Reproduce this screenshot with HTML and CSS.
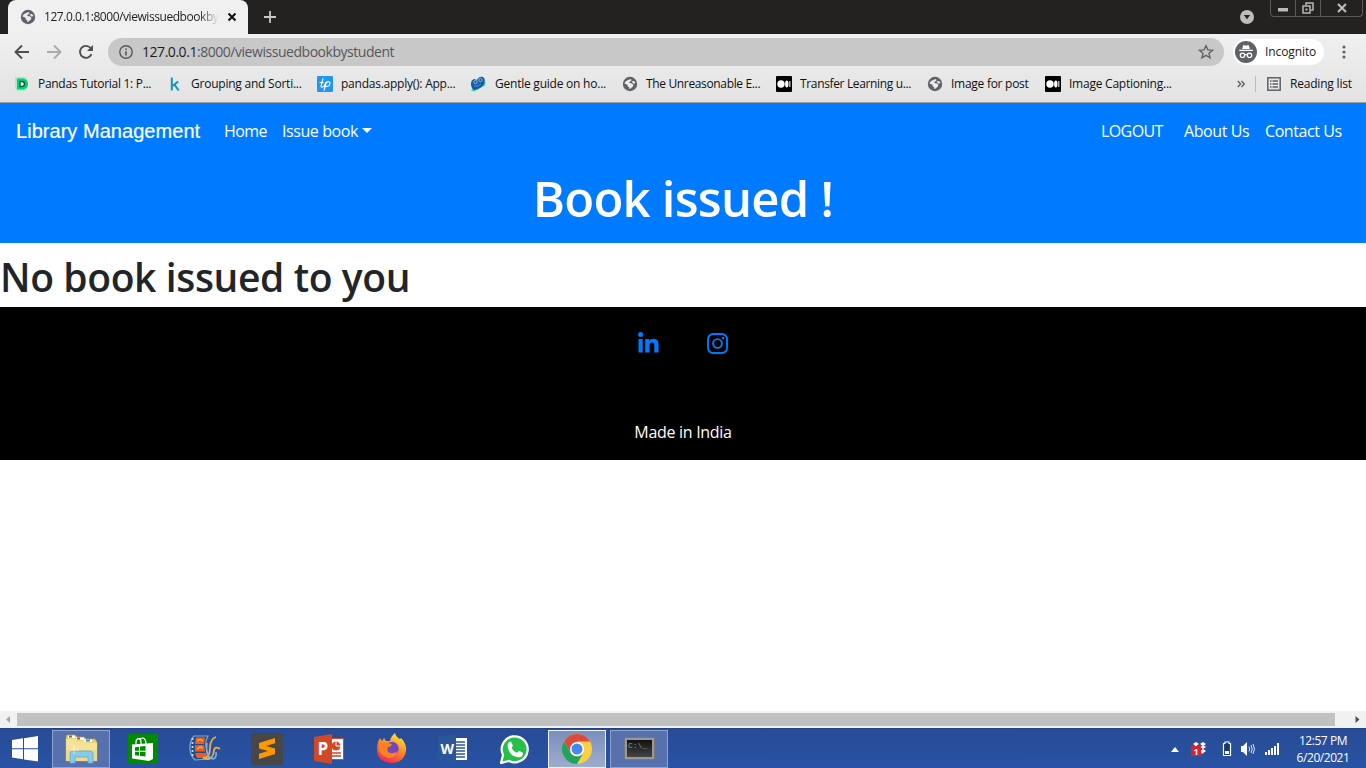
FILE: index.html
```html
<!DOCTYPE html>
<html lang="en">
<head>
<meta charset="utf-8">
<title>Library Management</title>
<link rel="stylesheet" href="styles.css">
</head>
<body>
<svg width="0" height="0" class="defs">
  <symbol id="globe" viewBox="0 0 16 16"><circle cx="8" cy="8" r="7.2" fill="#5f6368"/><path d="M2.500 7.500 3.500 5.500 6 4l3-1 .5 1.500L8 5.500 7 7l2.500.3 2 1.500-.8 2-2.200 1.700-1.500.5.3-1.800-1.500-.8-.3-1.600-1.800-.8Z" fill="#ececec"/><path d="M9.500 5.500l2.500-.5 1.500 2-2 .7Z" fill="#ececec"/></symbol>
  <symbol id="medium" viewBox="0 0 16 16"><rect width="16" height="16" rx="1" fill="#000"/><circle cx="5" cy="8" r="3.7" fill="#fff"/><ellipse cx="10.8" cy="8" rx="1.7" ry="3.5" fill="#fff"/><path d="M13.8 5v6" stroke="#ddd" stroke-width="1.2"/></symbol>
</svg>

<header class="tabstrip">
  <div class="tab">
    <svg class="i16"><use href="#globe"/></svg>
    <span class="tab-title">127.0.0.1:8000/viewissuedbookbystudent</span>
    <svg class="tab-close" viewBox="0 0 10 10"><path d="M1.5 1.5l7 7M8.5 1.5l-7 7" stroke="#111" stroke-width="2"/></svg>
  </div>
  <svg class="plus" viewBox="0 0 12 12"><path d="M6 0v12M0 6h12" stroke="#c8c8c8" stroke-width="1.8"/></svg>
  <svg class="tab-search" viewBox="0 0 14 14"><circle cx="7" cy="7" r="7" fill="#bdbdbd"/><path d="M3.8 5h6.4L7 9.3Z" fill="#242220"/></svg>
  <div class="winctl">
    <span><svg width="12" height="10"><rect x="1" y="5" width="10" height="3.5" fill="#b9b9b9"/></svg></span>
    <span><svg width="12" height="12" viewBox="0 0 12 12"><path d="M4 3V1h7v7H9" fill="none" stroke="#b9b9b9" stroke-width="1.5"/><rect x="1" y="4" width="7" height="7" fill="#242220" stroke="#b9b9b9" stroke-width="1.5"/><rect x="3.5" y="6.5" width="2" height="2" fill="#b9b9b9"/></svg></span>
    <span><svg width="10" height="10" viewBox="0 0 10 10"><path d="M1 1l8 8M9 1l-8 8" stroke="#b9b9b9" stroke-width="2.2"/></svg></span>
  </div>
</header>

<div class="toolbar">
  <svg class="nav-ico back" viewBox="0 0 16 16"><path d="M15 8H2M8 1.5 1.5 8 8 14.5" fill="none" stroke="#4c4f53" stroke-width="1.9"/></svg>
  <svg class="nav-ico fwd" viewBox="0 0 16 16"><path d="M1 8h13M8 1.5 14.5 8 8 14.5" fill="none" stroke="#ababab" stroke-width="1.9"/></svg>
  <svg class="nav-ico reload" viewBox="0 0 16 16"><path d="M13.500 10.200A6 6 0 1 1 12.600 4l1 1.200" fill="none" stroke="#4c4f53" stroke-width="1.900"/><path d="M15 1v6H9Z" fill="#4c4f53"/></svg>
  <div class="omnibox">
    <svg class="info" viewBox="0 0 14 14"><circle cx="7" cy="7" r="6.2" fill="none" stroke="#55585c" stroke-width="1.4"/><path d="M7 6.2v4.3M7 3.4V5" stroke="#55585c" stroke-width="1.6"/></svg>
    <span class="url"><b>127.0.0.1</b>:8000/viewissuedbookbystudent</span>
    <svg class="star" viewBox="0 0 16 16"><path d="M8 1.7l1.9 4.2 4.6.4-3.5 3 1.1 4.5L8 11.4l-4.1 2.4L5 9.3l-3.5-3 4.6-.4Z" fill="none" stroke="#5f6368" stroke-width="1.4"/></svg>
  </div>
  <div class="incog">
    <svg width="22" height="22" viewBox="0 0 22 22"><circle cx="11" cy="11" r="11" fill="#5f6368"/><path d="M7.2 8 8.2 4.3h1.6l1.2.5 1.2-.5h1.6L14.8 8ZM4.2 8.8h13.6V10H4.2Z" fill="#fff"/><path d="M9.600 14q1.400-.9 2.800 0" stroke="#fff" fill="none" stroke-width="1.1"/><circle cx="7.500" cy="14.300" r="2.200" fill="none" stroke="#fff" stroke-width="1.2"/><circle cx="14.500" cy="14.300" r="2.200" fill="none" stroke="#fff" stroke-width="1.2"/></svg>
    <span>Incognito</span>
  </div>
  <svg class="dots" viewBox="0 0 4 14"><g fill="#5f6368"><circle cx="2" cy="2" r="1.600"/><circle cx="2" cy="7" r="1.600"/><circle cx="2" cy="12" r="1.600"/></g></svg>
</div>

<div class="bookmarks">
  <div class="bm-grid">
    <div class="bm"><svg class="i16" viewBox="0 0 16 16"><path d="M1 1h10l3 3v8l-3 3H3l-2-3Z" fill="#a6ecc8"/><path d="M3 2.500h5.500C12 2.500 14 5 14 8s-2 5.500-5.500 5.500H3Z" fill="#0ccb7a"/><path d="M6 5.500h2a2.500 2.500 0 0 1 0 5H6Z" fill="#e8f8ef" stroke="#0b5e48" stroke-width="1.500"/></svg><span class="b1">Pandas Tutorial 1: P...</span></div>
    <div class="bm"><svg class="i16" viewBox="0 0 16 16"><path d="M5.800 1.500v13M12.200 5.500 6.500 10M8.400 8.500l4.300 6" fill="none" stroke="#1296be" stroke-width="2"/></svg><span class="b2">Grouping and Sorti...</span></div>
    <div class="bm"><svg class="i16" viewBox="0 0 16 16"><rect width="16" height="16" rx="1" fill="#2196f3"/><path d="M2.500 6.500h4M6 2.500 4 10q0 2.300 3 .2l2-4M9.500 5.500 7 14.500M9 7.500c2-3 4.600-2 3.800.6-.7 2.400-3.500 3-4.400 1.500" fill="none" stroke="#fff" stroke-width="1.100"/></svg><span class="b3">pandas.apply(): App...</span></div>
    <div class="bm"><svg class="i16" viewBox="0 0 16 16"><path d="M3 12 15.500 5.500 15 9.500 4 15.500 1 14.500Z" fill="#27d8b5"/><path d="M1 8Q1 4 4 3l3 1q2-4 6-3 3 2 1 7-3 5-10 6-3-2-3-6Z" fill="#1859a4"/><circle cx="5.500" cy="6" r="1.700" fill="none" stroke="#8eb9db"/><circle cx="10.500" cy="4" r="1.700" fill="none" stroke="#8eb9db"/><path d="M4 10q4 1 7-2" stroke="#5692c5" fill="none"/></svg><span class="b4">Gentle guide on ho...</span></div>
    <div class="bm"><svg class="i16"><use href="#globe"/></svg><span class="b5">The Unreasonable E...</span></div>
    <div class="bm"><svg class="i16"><use href="#medium"/></svg><span class="b6">Transfer Learning u...</span></div>
    <div class="bm"><svg class="i16"><use href="#globe"/></svg><span class="b7">Image for post</span></div>
    <div class="bm"><svg class="i16"><use href="#medium"/></svg><span class="b8">Image Captioning...</span></div>
  </div>
  <svg class="more" viewBox="0 0 8 8"><path d="M.8 1l2.800 3L.8 7M4.500 1l2.800 3-2.800 3" fill="none" stroke="#5f6368" stroke-width="1.400"/></svg>
  <div class="reading">
    <svg width="14" height="14" viewBox="0 0 14 14"><rect x=".8" y=".8" width="12.400" height="12.400" fill="none" stroke="#5f6368" stroke-width="1.500"/><path d="M3 4h1.500M3 7h1.500M3 10h1.500M5.500 4H11M5.500 7H11M5.500 10H11" stroke="#5f6368" stroke-width="1.400"/></svg>
    <span>Reading list</span>
  </div>
</div>

<main class="page">
  <nav class="navbar">
    <a class="brand">Library Management</a>
    <a class="home">Home</a>
    <a class="issue">Issue book</a><i class="caret"></i>
    <a class="logout">LOGOUT</a>
    <a class="about">About Us</a>
    <a class="contact">Contact Us</a>
  </nav>
  <h1 class="title"><span>Book issued !</span></h1>
  <h1 class="empty">No book issued to you</h1>
  <footer class="foot">
    <div class="social">
      <svg class="linkedin" width="21" height="21" viewBox="0 0 21 21" fill="#007bff"><circle cx="2.600" cy="2.500" r="2.500"/><path d="M.5 7h4.200v13.500H.5ZM7.200 7h4v1.900C12 7.500 13.400 6.700 15.300 6.700c4.300 0 5.200 2.800 5.200 6.500v7.300h-4.200V14c0-1.600 0-3.600-2.200-3.600S11.500 12.100 11.500 13.900v6.600H7.200Z"/></svg>
      <svg width="21" height="21" viewBox="0 0 21 21" fill="none" stroke="#007bff"><rect x="1" y="1" width="19" height="19" rx="5.200" stroke-width="1.900"/><circle cx="10.500" cy="10.500" r="4.400" stroke-width="1.900"/><circle cx="16.100" cy="4.900" r="1.250" fill="#007bff" stroke="none"/></svg>
    </div>
    <p class="made"><span>Made in India</span></p>
  </footer>
</main>

<div class="hscroll">
  <svg viewBox="0 0 17 17"><path d="M10 5v7L6 8.500Z" fill="#a3a3a3"/></svg>
  <div class="thumb"></div>
  <svg viewBox="0 0 17 17"><path d="M6.500 5v7l4-3.500Z" fill="#505050"/></svg>
</div>

<div class="taskbar">
  <div class="start"><svg width="26" height="26" viewBox="0 0 26 26" fill="#fff"><path d="M0 4 11 2.300V12.200H0ZM12 2.200 26 0v12.200H12ZM0 13.200h11v10L0 21.600ZM12 13.200h14V25.500L12 23.400Z"/></svg></div>
  <div class="task open"><svg width="34" height="30" viewBox="0 0 34 30"><path d="M2 27V3l1-2h8l2 2h7l2 2h9l2 3v19Z" fill="#e9cf72" stroke="#b99a42" stroke-width=".7"/><path d="M4 1.500h7V4H4Z" fill="#fff"/><path d="M5 1.500h3v2H5Z" fill="#18a34a"/><path d="M12 3.500h8V6h-8Z" fill="#fff"/><path d="M13 3.500h3v2h-3Z" fill="#d74223"/><path d="M20 5.500h8V8h-8Z" fill="#fff"/><path d="M22 5.500h4v2h-4Z" fill="#2592db"/><path d="M2 5h9l2 2h7l2 2h11v18H2Z" fill="#f4e19a"/><path d="M2 16h31v11H2Z" fill="#edd481" opacity=".7"/><path d="M6 29v-9q0-3 3-3h17q3 0 3 3v9h-5v-6H11v6Z" fill="#86cce9" stroke="#5aabd0" stroke-width=".8"/><path d="M10 11v9M6 16h9" stroke="#fffce2" stroke-width=".8" opacity=".8"/></svg></div>
  <div class="task"><svg width="30" height="30" viewBox="0 0 30 30"><rect width="30" height="30" fill="#008a00"/><path d="M4 10.500 25 9v16l-4 2L4 24.500Z" fill="#fff"/><path d="M8 11V8q0-3 2.500-3.500T13 8v3M11 6q1-2 4-2 3 1 3 6" fill="none" stroke="#fff" stroke-width="1.200"/><path d="M7 13.200l4-.5v4H7ZM12 12.600l5.500-.6v4.700H12ZM7 17.700h4v4l-4-.5ZM12 17.700h5.500v4.800L12 21.900Z" fill="#008a00"/></svg></div>
  <div class="task"><svg width="32" height="27" viewBox="0 0 32 27"><path d="M5 1h14q-3 5-2 11t3 12L6 25Q0 19 1 10Q2 4 5 1Z" fill="#244c82" stroke="#79add8" stroke-width="1.200"/><path d="M7 2.500h9l-1 6.500H6ZM6 10h9l1 6.500H6ZM6 18h11l1 5H8Z" fill="#ed5b20"/><path d="M8 6q3-3 6 0M8 14l3-2 3 1" fill="none" stroke="#ffb33b" stroke-width="1.500"/><path d="M3.500 3v20" stroke="#b9daef" stroke-width="1.800" stroke-dasharray="2 2"/><path d="M27 2Q21 4 21 13q0 10-7 10 10 4 11-8 1-4 6-1" fill="none" stroke="#e9ac4d" stroke-width="1.800"/><path d="M18 8q-2 14 6 16 4-1 3-7" fill="none" stroke="#78b5e8" stroke-width="1.500"/></svg></div>
  <div class="task"><svg width="32" height="32" viewBox="0 0 32 32"><rect width="32" height="32" rx="2" fill="#474747"/><path d="M24 5 8 10v5.500L17 18l-9 2.700V26l16-5v-5.500L15 13l9-2.700Z" fill="#ff9800"/></svg></div>
  <div class="task"><svg width="30" height="30" viewBox="0 0 30 30"><rect x="15" y="4.500" width="14.500" height="21" fill="#fff" stroke="#d24726"/><circle cx="22" cy="12" r="4.500" fill="#d24726"/><path d="M22 12V7.500M22 12h5" stroke="#fff"/><path d="M18 19h9M18 22h9" stroke="#d24726" stroke-width="1.500"/><path d="M0 3 18 0v30L0 27Z" fill="#d24726"/><text class="office-letter" x="3.500" y="21">P</text></svg></div>
  <div class="task"><svg width="31" height="31" viewBox="0 0 31 31"><defs><linearGradient id="fox" x1=".8" y1="0" x2=".3" y2="1"><stop offset="0" stop-color="#fff044"/><stop offset=".45" stop-color="#ff9126"/><stop offset="1" stop-color="#f02659"/></linearGradient></defs><path d="M2 9 4 5l2 3 2-3 2 3h4Q15 3 19 0q1 4 5 6l1-1q6 6 5 13-2 12-15 12Q1 29 1 16Q1 12 2 9Z" fill="url(#fox)"/><circle cx="16" cy="15.500" r="6.700" fill="#7448bd"/><path d="M3 12q5-4 9-2l4 1q-1 3-4 3-2 5 2 6 4 1 7-2-1 7-8 7-8-2-10-8Z" fill="#ff811f"/></svg></div>
  <div class="task"><svg width="30" height="28" viewBox="0 0 30 28"><rect x="16" y="3" width="13" height="22" fill="#fff"/><path d="M18 7h9M18 10h9M18 13h9M18 16h9M18 19h9M18 22h9" stroke="#2b579a" stroke-width="1.300"/><path d="M0 2 18 0v28L0 25Z" fill="#2b579a"/><text class="office-letter word" x="2.500" y="19">W</text></svg></div>
  <div class="task"><svg width="30" height="30" viewBox="0 0 30 30"><path d="M1 29 3 21A13 13 0 1 1 9 27Z" fill="#25bf49" stroke="#fff" stroke-width="2.200"/><path d="M9 8l2-.3 2 4-1.500 2q2 4 5.500 5l2-2 4 2q0 5-5 4.500Q9 22 7.500 12 7.500 10 9 8Z" fill="#fff"/></svg></div>
  <div class="task open active"><svg width="30" height="30" viewBox="0 0 30 30"><circle cx="15" cy="15" r="15" fill="#fcd044"/><path d="M15 15 2 7.500A15 15 0 0 1 28 7.500H15Z" fill="#dd4b3e"/><path d="M2 7.500 8.500 18.700 15 15V7.500Z" fill="#dd4b3e"/><path d="M2 7.500A15 15 0 0 0 15 30l6.500-11.300A7.500 7.500 0 0 1 8.500 18.700Z" fill="#1da462"/><circle cx="15" cy="15" r="7" fill="#fff"/><circle cx="15" cy="15" r="5.500" fill="#4688f1"/></svg></div>
  <div class="task open"><svg width="31" height="24" viewBox="0 0 31 24"><defs><linearGradient id="term" x2="0" y2="1"><stop offset="0" stop-color="#111"/><stop offset="1" stop-color="#444"/></linearGradient></defs><rect x=".5" y=".5" width="30" height="22" rx="1" fill="#999" stroke="#777"/><rect x="3" y="3" width="25" height="17" fill="url(#term)"/><text class="prompt" x="4" y="11">C:\_</text></svg></div>
  <div class="tray">
    <svg class="t-up" width="8" height="5" viewBox="0 0 8 5"><path d="M4 0l4 5H0Z" fill="#fff"/></svg>
    <svg class="t-box" width="17" height="16" viewBox="0 0 17 16"><path d="M2 3l3-2 3 2-3 2ZM9 3l3-2 3 2-3 2ZM2 6l3-2 3 2-3 2ZM9 6l3-2 3 2-3 2ZM9 10l3-2 3 2-4 3Z" fill="#fff"/><rect y="5" width="10" height="10" fill="#e3202a"/><text class="badge" x="2.500" y="13.500">1</text></svg>
    <svg class="t-bat" width="10" height="16" viewBox="0 0 10 16"><path d="M3 1h4v1.500h1.500v12h-7v-12H3Z" fill="#17386f" stroke="#fff" stroke-width="1.200"/><path d="M3 10h4v3H3Z" fill="#fff"/></svg>
    <svg class="t-vol" width="16" height="16" viewBox="0 0 16 16"><path d="M1 5h2l4-4v14l-4-4H1Z" fill="#fff"/><path d="M9 5.500q1.500 2.500 0 5M11 4q2.500 4 0 8M13 3q3 5 0 10" fill="none" stroke="#dbe4f3" stroke-width="1"/></svg>
    <svg width="16" height="12" viewBox="0 0 16 12"><path d="M1 9h2v3H1ZM4 7h2v5H4ZM7 5h2v7H7ZM10 3h2v9h-2ZM13 0h2v12h-2Z" fill="#fff"/></svg>
  </div>
  <div class="clock"><span class="time">12:57 PM</span><span class="date">6/20/2021</span></div>
</div>
</body>
</html>
```
FILE: styles.css
```css
* { box-sizing: border-box; }
body {
  margin: 0; width: 1366px; height: 768px; overflow: hidden;
  display: flex; flex-direction: column; background: #fff;
  font: 12px/16px "Open Sans", "Noto Sans", sans-serif; color: #222;
  white-space: nowrap;
}
svg { display: block; flex: none; }
.defs { position: absolute; }
.i16 { width: 16px; height: 16px; }

.tabstrip { flex: none; height: 34px; background: #242220; display: flex; align-items: center; }
.tab { width: 240px; height: 34px; margin-left: 8px; padding-left: 12px; background: #f0f0f0; border-radius: 8px 8px 0 0; display: flex; align-items: center; }
.tab-title { width: 175px; margin-left: 8px; overflow: hidden; letter-spacing: -.44px; -webkit-mask-image: linear-gradient(90deg, #000 155px, transparent 175px); }
.tab-close { width: 10px; height: 10px; margin-left: 8px; }
.plus { width: 12px; height: 12px; margin-left: 16px; }
.tab-search { width: 14px; height: 14px; margin-left: auto; }
.winctl { display: flex; align-self: flex-start; height: 17px; margin: 0 3px 0 16px; border: 1px solid #5c5a59; border-top: 0; border-radius: 0 0 4px 4px; }
.winctl span { width: 25px; display: flex; align-items: center; justify-content: center; border-right: 1px solid #5c5a59; }
.winctl span:last-child { width: 41px; border: 0; }

.toolbar { flex: none; height: 36px; background: linear-gradient(#f0f0f0, #e9e9e9); display: flex; align-items: center; padding-left: 14px; }
.nav-ico { width: 16px; height: 16px; margin-right: 16px; }
.omnibox { width: 1116px; height: 28px; margin-left: -2px; border-radius: 14px; background: #c8c8c8; display: flex; align-items: center; padding: 0 10px 0 11px; }
.info { width: 14px; height: 14px; }
.url { margin-left: 9px; font-size: 14px; color: #55585c; letter-spacing: -.46px; }
.url b { font-weight: 400; color: #1c1c1c; }
.star { width: 16px; height: 16px; margin-left: auto; }
.incog { width: 91px; height: 26px; margin-left: 9px; padding-left: 2px; background: #fff; border-radius: 13px; display: flex; align-items: center; gap: 8px; }
.incog span { letter-spacing: -.1px; }
.dots { width: 4px; height: 14px; margin-left: 18px; }

.bookmarks { flex: none; height: 33px; background: linear-gradient(#e9e9e9, #e3e3e3); border-bottom: 1px solid #a09c98; display: flex; align-items: center; padding: 0 15px 4px 14px; color: #111; }
.bm-grid { display: grid; grid-template-columns: 152px 151px 153px 152px 154px 151px 118px 160px; }
.bm { display: flex; align-items: center; gap: 8px; letter-spacing: -.35px; }
.b1 { letter-spacing: -.3px; }
.b2, .b4 { margin-left: 1px; letter-spacing: -.23px; }
.b3, .b8 { letter-spacing: -.24px; }
.b7 { letter-spacing: -.27px; }
.more { width: 8px; height: 8px; margin-left: 32px; }
.reading { margin-left: 10px; height: 16px; padding-left: 11px; border-left: 1px solid #bbb; display: flex; align-items: center; gap: 9px; letter-spacing: -.2px; }

.page { flex: 1; background: #fff; }
.navbar { height: 56px; padding: 0 24px 0 16px; background: #007bff; color: #fff; display: flex; align-items: center; font-size: 16px; line-height: 24px; letter-spacing: -.42px; }
.brand { width: 184px; margin-right: 24px; font: 20px/30px "Liberation Sans", sans-serif; letter-spacing: .04px; -webkit-text-stroke: .2px #fff; }
.home { width: 42px; margin-right: 16px; letter-spacing: -.6px; }
.issue { width: 76px; }
.caret { margin: -2px 0 0 4px; border: 5px solid transparent; border-top-color: #fff; border-bottom: 0; }
.logout { width: 62px; margin-left: auto; margin-right: 21px; letter-spacing: -.6px; }
.about { width: 65px; margin-right: 16px; }
.contact { width: 77px; }
.title { margin: 0; height: 84px; padding-top: 9px; background: #007bff; color: #fff; font-size: 49px; font-weight: 600; line-height: 60px; text-align: center; letter-spacing: -.75px; }
.empty { margin: 0; height: 64px; padding: 10px 0 0; color: #212529; font-size: 39px; font-weight: 600; line-height: 48px; letter-spacing: -.38px; }
.foot { height: 153px; background: #000; color: #fff; padding-top: 26px; text-align: center; }
.social { display: flex; justify-content: center; gap: 48px; }
.linkedin { margin-top: -1px; }
.made { margin: 66px 0 0; font-size: 16px; line-height: 24px; letter-spacing: -.3px; }

.hscroll { flex: none; height: 17px; background: #f1f1f1; display: flex; align-items: center; }
.hscroll svg { width: 17px; height: 17px; }
.thumb { width: 1318px; height: 13px; margin-right: 14px; background: #c1c1c1; }

.taskbar { flex: none; height: 40px; background: linear-gradient(#284b96, #2853a4); border-top: 1px solid #1f4385; display: flex; align-items: center; }
.start { width: 52px; padding-left: 12px; }
.task { width: 58px; height: 38px; margin-right: 4px; display: flex; align-items: center; justify-content: center; }
.open { background: #5671ad; border: 1px solid #91a3ca; }
.active { background: linear-gradient(#7a8fbd, #9eaccd); border-color: #eef1f7; }
.office-letter { font: bold 17px "Open Sans", sans-serif; fill: #fff; }
.word { font-size: 14px; }
.prompt { font: 8px "Liberation Mono", monospace; fill: #999; }
.badge { font: bold 9px "Open Sans", sans-serif; fill: #fff; }
.tray { margin-left: auto; display: flex; align-items: center; padding-top: 1px; }
.t-up { margin-right: 12px; }
.t-box { margin-right: 14px; }
.t-bat { margin-right: 8px; }
.t-vol { margin-right: 8px; }
.clock { width: 54px; margin: 0 16px; color: #fff; display: flex; flex-direction: column; align-items: center; line-height: 17px; letter-spacing: -.45px; }
```
